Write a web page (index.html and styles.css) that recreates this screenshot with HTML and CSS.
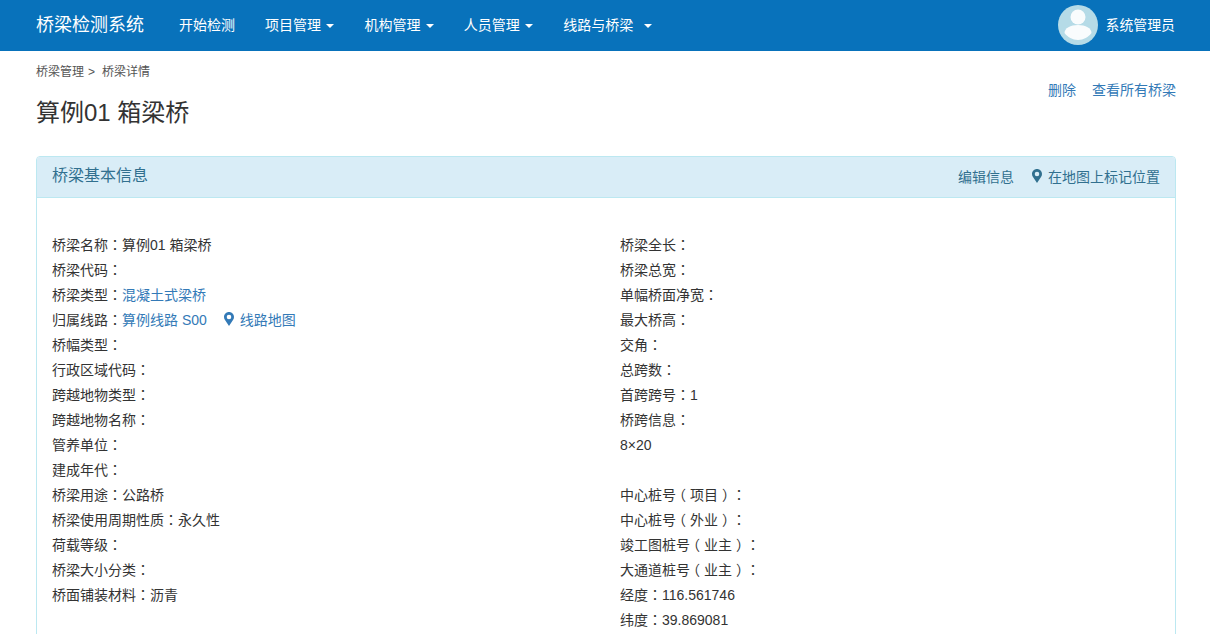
FILE: index.html
```html
<!DOCTYPE html>
<html lang="zh-CN">
<head>
<meta charset="utf-8">
<title>桥梁详情</title>
<link rel="stylesheet" href="styles.css">
</head>
<body>
<nav class="navbar">
  <a class="brand">桥梁检测系统</a>
  <ul class="nav">
    <li><a>开始检测</a></li>
    <li><a>项目管理 <span class="caret"></span></a></li>
    <li><a>机构管理 <span class="caret"></span></a></li>
    <li><a>人员管理 <span class="caret"></span></a></li>
    <li><a>线路与桥梁 &nbsp;<span class="caret caret-wide"></span></a></li>
  </ul>
  <div class="user">
    <svg class="avatar" viewBox="0 0 40 40" aria-hidden="true">
      <circle cx="20" cy="20" r="20" fill="#b5dbe7"/>
      <circle cx="20" cy="12" r="7.500" fill="#fff" fill-opacity=".92"/>
      <path d="M6.500 28c0-5 6-8 13.500-8s13.500 3 13.500 8c-3 4-8 7-13.500 7s-10.500-3-13.500-7z" fill="#fff" fill-opacity=".92"/>
    </svg>
    <span>系统管理员</span>
  </div>
</nav>
<main class="page">
  <header class="head">
    <div>
      <div class="crumb">桥梁管理<span class="gt">&gt;</span>桥梁详情</div>
      <h1>算例01 箱梁桥</h1>
    </div>
    <div class="actions"><a>删除</a><a>查看所有桥梁</a></div>
  </header>
  <section class="panel">
    <div class="panel-heading">
      <h2>桥梁基本信息</h2>
      <div class="panel-tools">
        <a>编辑信息</a>
        <a><svg class="pin" viewBox="0 0 10 14" aria-hidden="true"><path fill-rule="evenodd" d="M5 0C2.200 0 0 2.200 0 5c0 1.200.4 2.200 1 3.100L5 14l4-5.900c.6-.9 1-1.900 1-3.100 0-2.800-2.200-5-5-5zm0 2.700a2.300 2.300 0 1 1 0 4.600 2.300 2.300 0 0 1 0-4.600z"/></svg>在地图上标记位置</a>
      </div>
    </div>
    <div class="panel-body">
      <div class="col">
        <p>桥梁名称<span class="fw">：</span>算例01 箱梁桥</p>
        <p>桥梁代码<span class="fw">：</span></p>
        <p>桥梁类型<span class="fw">：</span><a>混凝土式梁桥</a></p>
        <p>归属线路<span class="fw">：</span><a>算例线路 S00</a><a class="route-map"><svg class="pin" viewBox="0 0 10 14" aria-hidden="true"><path fill-rule="evenodd" d="M5 0C2.200 0 0 2.200 0 5c0 1.200.4 2.200 1 3.100L5 14l4-5.900c.6-.9 1-1.900 1-3.100 0-2.800-2.200-5-5-5zm0 2.700a2.300 2.300 0 1 1 0 4.600 2.300 2.300 0 0 1 0-4.600z"/></svg>线路地图</a></p>
        <p>桥幅类型<span class="fw">：</span></p>
        <p>行政区域代码<span class="fw">：</span></p>
        <p>跨越地物类型<span class="fw">：</span></p>
        <p>跨越地物名称<span class="fw">：</span></p>
        <p>管养单位<span class="fw">：</span></p>
        <p>建成年代<span class="fw">：</span></p>
        <p>桥梁用途<span class="fw">：</span>公路桥</p>
        <p>桥梁使用周期性质<span class="fw">：</span>永久性</p>
        <p>荷载等级<span class="fw">：</span></p>
        <p>桥梁大小分类<span class="fw">：</span></p>
        <p>桥面铺装材料<span class="fw">：</span>沥青</p>
      </div>
      <div class="col">
        <p>桥梁全长<span class="fw">：</span></p>
        <p>桥梁总宽<span class="fw">：</span></p>
        <p>单幅桥面净宽<span class="fw">：</span></p>
        <p>最大桥高<span class="fw">：</span></p>
        <p>交角<span class="fw">：</span></p>
        <p>总跨数<span class="fw">：</span></p>
        <p>首跨跨号<span class="fw">：</span>1</p>
        <p>桥跨信息<span class="fw">：</span></p>
        <p>8×20</p>
        <p>&nbsp;</p>
        <p>中心桩号<span class="po">（</span>项目<span class="pc">）</span><span class="fw">：</span></p>
        <p>中心桩号<span class="po">（</span>外业<span class="pc">）</span><span class="fw">：</span></p>
        <p>竣工图桩号<span class="po">（</span>业主<span class="pc">）</span><span class="fw">：</span></p>
        <p>大通道桩号<span class="po">（</span>业主<span class="pc">）</span><span class="fw">：</span></p>
        <p>经度<span class="fw">：</span>116.561746</p>
        <p>纬度<span class="fw">：</span>39.869081</p>
      </div>
    </div>
  </section>
</main>
</body>
</html>
```
FILE: styles.css
```css
* { box-sizing: border-box; }
html, body { margin: 0; height: 634px; overflow: hidden; }
body {
  font-family: "Liberation Sans", "Noto Sans CJK SC", sans-serif;
  font-size: 14px;
  line-height: 20px;
  color: #333;
  background: #fff;
  text-spacing-trim: space-all;
}
a { color: #337ab7; text-decoration: none; }
.fw { font-family: "Noto Sans CJK TC", sans-serif; font-feature-settings: "locl" 0; line-height: 1; }
.po { font-feature-settings: "halt" 1; margin: 0 4px 0 3px; }
.pc { font-feature-settings: "halt" 1; margin: 0 3px 0 4px; }
.navbar {
  display: flex;
  align-items: center;
  height: 51px;
  padding: 0 35px 1px 36px;
  background: #0872bb;
  color: #fff;
}
.brand { font-size: 18px; color: #fff; margin-right: 20px; }
.nav { display: flex; list-style: none; margin: 0; padding: 0; }
.nav a { display: block; padding: 0 15px; color: #fff; white-space: nowrap; }
.caret {
  display: inline-block;
  width: 0;
  height: 0;
  margin-left: 1.500px;
  vertical-align: middle;
  border-top: 4px solid #fff;
  border-left: 4px solid transparent;
  border-right: 4px solid transparent;
}
.caret-wide { margin-left: 3.500px; }
.user { display: flex; align-items: center; gap: 8px; margin-left: auto; font-size: 13.900px; }
.avatar { width: 40px; height: 40px; display: block; }
.page { padding: 0 34px 0 36px; }
.head { display: flex; justify-content: space-between; height: 105px; }
.crumb { font-size: 12px; line-height: 17px; color: #555; margin-top: 12px; padding-top: 1px; }
.gt { margin: 0 7px 0 4px; }
h1 { margin: 15px 0 0; font-size: 24px; line-height: 34px; font-weight: 400; color: #333; }
.actions { display: flex; gap: 16px; margin-top: 29px; }
.panel {
  border: 1px solid #bce8f1;
  border-radius: 4px;
  height: 600px;
  overflow: hidden;
}
.panel-heading {
  display: flex;
  justify-content: space-between;
  align-items: center;
  height: 41px;
  padding: 0 15px;
  background: #d9edf7;
  border-bottom: 1px solid #bce8f1;
  color: #31708f;
}
h2 { margin: 0; font-size: 16px; line-height: 18px; font-weight: 400; position: relative; top: -1px; }
.panel-tools { display: flex; gap: 18px; }
.panel-tools a { color: #31708f; }
.pin { width: 10px; height: 14px; margin-right: 6px; fill: currentColor; vertical-align: -1px; }
.panel-body {
  display: grid;
  grid-template-columns: 568px 1fr;
  padding: 35px 15px 0;
}
.col p { margin: 0; height: 25px; line-height: 25px; white-space: nowrap; }
.route-map { margin-left: 17px; }
```
